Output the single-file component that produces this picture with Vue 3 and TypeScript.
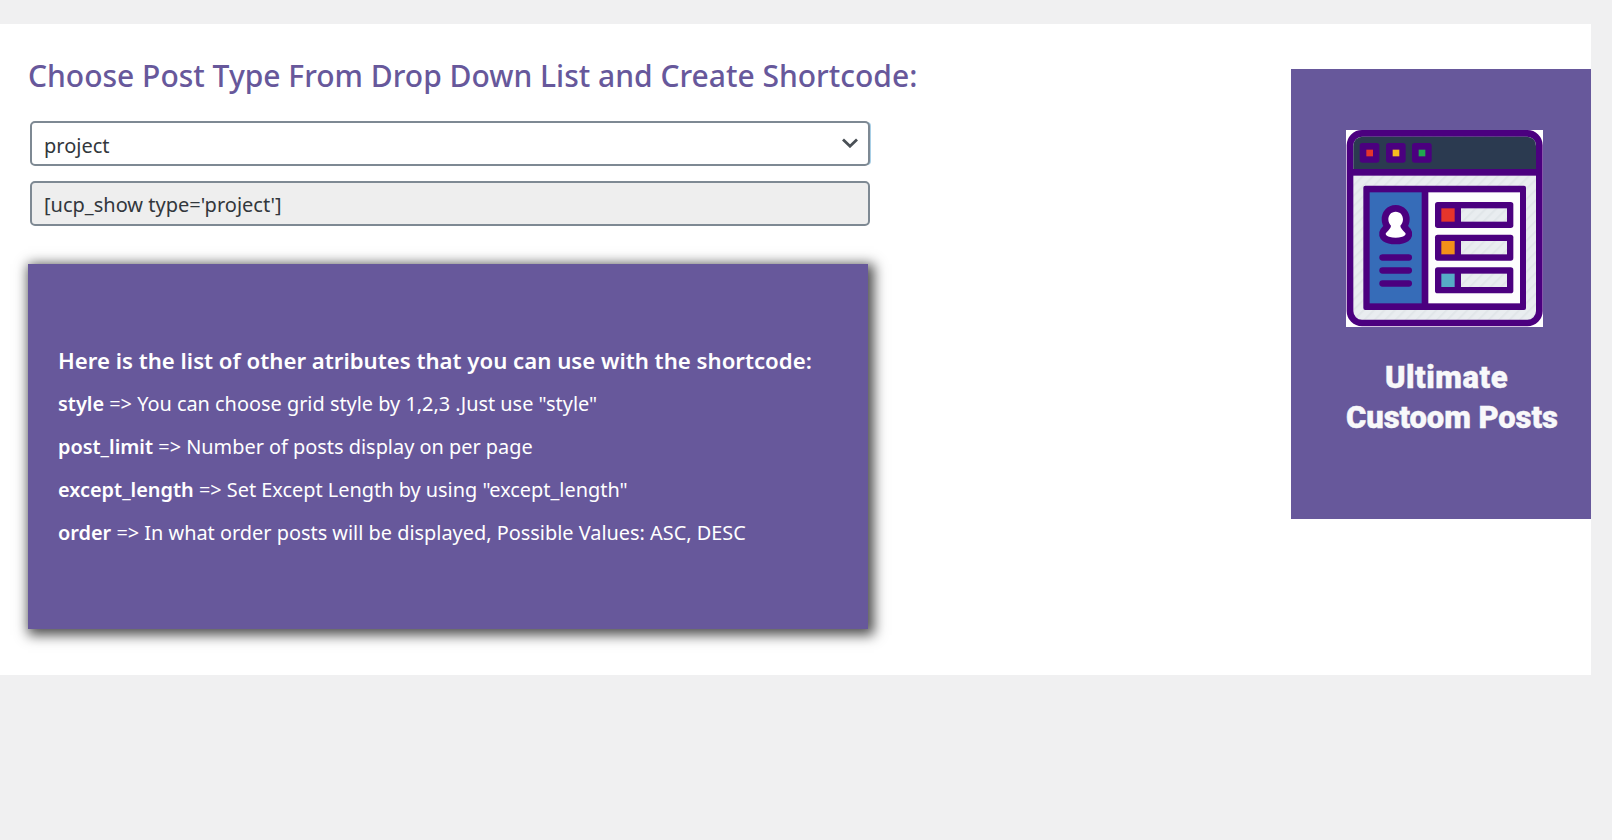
<script setup lang="ts">
const rows = [
  { y: 231, color: '#e5352b' },
  { y: 329, color: '#f39019' },
  { y: 427, color: '#56acc6' },
]
const dots = [
  { x: 59, color: '#e5352b' },
  { x: 138, color: '#f5bd1f' },
  { x: 216, color: '#20a84f' },
]
const lines = [388, 427, 466]
const attributes = [
  { name: 'style', text: ' => You can choose grid style by 1,2,3 .Just use "style"' },
  { name: 'post_limit', text: ' => Number of posts display on per page' },
  { name: 'except_length', text: ' => Set Except Length by using "except_length"' },
  { name: 'order', text: ' => In what order posts will be displayed, Possible Values: ASC, DESC' },
]
</script>

<template>
  <div class="page">
    <main class="panel">
      <section class="content">
        <h1 class="title">Choose Post Type From Drop Down List and Create Shortcode:</h1>
        <div class="select-wrap">
          <select class="field select">
            <option>project</option>
          </select>
          <svg class="chevron" viewBox="0 0 16 10" width="16" height="10" aria-hidden="true">
            <path d="M1 1.500 8 8.200l7-6.700" fill="none" stroke="#4a5056" stroke-width="2.800" />
          </svg>
        </div>
        <input class="field code" readonly value="[ucp_show type='project']" />
        <div class="card">
          <h2 class="card-title">Here is the list of other atributes that you can use with the shortcode:</h2>
          <p v-for="a in attributes" :key="a.name" class="attr"><b>{{ a.name }}</b>{{ a.text }}</p>
        </div>
      </section>
      <aside class="promo">
        <svg class="logo" viewBox="18 15 591 591" width="197" height="197" aria-hidden="true">
          <defs>
            <pattern id="stripes" width="22" height="22" patternUnits="userSpaceOnUse" patternTransform="rotate(45)">
              <rect width="22" height="22" fill="#e9edf0" />
              <rect width="6" height="22" fill="#e1e6e9" />
            </pattern>
          </defs>
          <rect x="18" y="15" width="591" height="591" fill="#fff" />
          <rect x="30" y="25" width="568" height="569" rx="36" fill="url(#stripes)" stroke="#4b007f" stroke-width="20" />
          <path d="M40 132V62a27 27 0 0 1 27-27h494a27 27 0 0 1 27 27v70z" fill="#2b3a50" />
          <rect x="30" y="132" width="568" height="20" fill="#4b007f" />
          <rect v-for="d in dots" :key="d.x" :x="d.x" y="54" width="59" height="59" rx="8" fill="#4b007f" />
          <rect v-for="d in dots" :key="'i' + d.x" :x="d.x + 20" y="74" width="20" height="20" :fill="d.color" />
          <rect x="70" y="182" width="488" height="373" rx="6" fill="#4b007f" />
          <rect x="89" y="202" width="156" height="333" fill="#366cb8" />
          <rect x="265" y="202" width="275" height="333" fill="#fdfdfd" />
          <path
            d="M167 260c-14 0-22 11-22 23 0 9 4 15 8 19 0 6-5 11-15 22-3 4 1 14 29 14s32-10 29-14c-10-11-15-16-15-22 4-4 8-10 8-19 0-12-8-23-22-23z"
            fill="#fff"
            stroke="#4b007f"
            stroke-width="40"
            stroke-linejoin="round"
            paint-order="stroke"
          />
          <rect v-for="l in lines" :key="l" x="118" :y="l" width="98" height="19" rx="9.500" fill="#4b007f" />
          <g v-for="r in rows" :key="r.y">
            <rect x="285" :y="r.y" width="235" height="78" rx="8" fill="#4b007f" />
            <rect x="304" :y="r.y + 19" width="40" height="40" :fill="r.color" />
            <rect x="363" :y="r.y + 19" width="138" height="40" fill="url(#stripes)" />
          </g>
        </svg>
        <div class="brand">
          <span class="brand-one">Ultimate</span>
          <span class="brand-two">Custoom Posts</span>
        </div>
      </aside>
    </main>
  </div>
</template>

<style>
html,
body {
  margin: 0;
  background: #f0f0f1;
}
</style>

<style scoped>
.page {
  min-height: 840px;
  padding-top: 24px;
  box-sizing: border-box;
  background: #f0f0f1;
  font-family: "Noto Sans", "Open Sans", sans-serif;
}
.panel {
  width: 1591px;
  height: 651px;
  background: #fff;
  display: flex;
  justify-content: space-between;
}
.content {
  width: 842px;
  padding-left: 28px;
}
.title {
  margin: 0;
  padding-top: 30px;
  color: #67589b;
  font-size: 30px;
  line-height: 44px;
  font-weight: 500;
  white-space: nowrap;
}
.select-wrap {
  position: relative;
  margin: 23px 0 0 2px;
}
.field {
  display: block;
  width: 840px;
  height: 45px;
  box-sizing: border-box;
  margin: 0;
  padding: 2px 12px 0;
  border: 2px solid #7e8993;
  border-radius: 5px;
  outline: none;
  font-family: inherit;
  font-size: 20px;
  color: #32373c;
}
.select {
  appearance: none;
  padding-top: 3px;
  background: #fff;
  box-shadow: 2px 0 0 -1px #a8cfe6;
}
.chevron {
  position: absolute;
  right: 12px;
  top: 17px;
  pointer-events: none;
}
.code {
  margin: 15px 0 0 2px;
  background: #eee;
}
.card {
  width: 840px;
  height: 365px;
  margin-top: 38px;
  padding: 80px 30px 0;
  box-sizing: border-box;
  background: #67589b;
  color: #fff;
  box-shadow: 3px 3px 12px 3px rgba(0, 0, 0, 0.7);
}
.card-title {
  margin: 0 0 2px;
  font-size: 22.200px;
  line-height: 34px;
  font-weight: 600;
  white-space: nowrap;
}
.attr {
  margin: 9px 0 0;
  font-size: 19.900px;
  line-height: 34px;
  white-space: nowrap;
}
.attr b {
  font-weight: 600;
}
.promo {
  width: 300px;
  height: 450px;
  margin-top: 45px;
  padding: 61px 0 0 55px;
  box-sizing: border-box;
  background: #67589b;
}
.logo {
  display: block;
}
.brand {
  margin-top: 31px;
  display: flex;
  flex-direction: column;
  color: #f8f8fa;
  font-family: Roboto, sans-serif;
  font-weight: 900;
  font-size: 31px;
  line-height: 40px;
  white-space: nowrap;
  -webkit-text-stroke: 0.4px #f8f8fa;
}
.brand-one {
  padding-left: 39px;
  letter-spacing: 0.5px;
}
.brand-two {
  letter-spacing: -0.1px;
}
</style>
